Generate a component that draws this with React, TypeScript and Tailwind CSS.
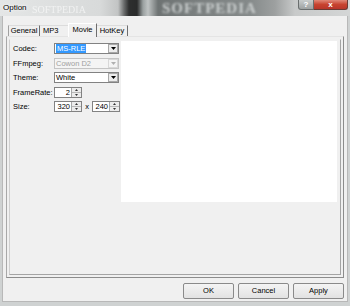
import React from "react";

const font = { fontFamily: '"Liberation Sans", Arial, sans-serif' };

function Arrow({ color = "#000" }: { color?: string }) {
  return (
    <svg width="5" height="3" viewBox="0 0 5 3">
      <path d="M0 0 H5 L2.5 3 Z" fill={color} />
    </svg>
  );
}

function Combo({ text, selected, disabled }: { text: string; selected?: boolean; disabled?: boolean }) {
  return (
    <div
      className={`w-[65px] h-[11px] flex border ${
        disabled ? "border-[#c4c4c4] bg-[#f4f4f4]" : "border-[#828282] bg-white"
      }`}
    >
      <div className="flex-1 flex items-center pl-[1px] overflow-hidden">
        <span
          className={`leading-[9px] ${
            selected ? "bg-[#3399ff] text-white px-[1px]" : disabled ? "text-[#a0a0a0]" : "text-black"
          }`}
        >
          {text}
        </span>
      </div>
      <div
        className={`w-[10px] h-full flex items-center justify-center border ${
          disabled ? "border-[#d8d8d8] bg-[#f4f4f4]" : "border-[#a8a8a8] bg-[#ececec]"
        }`}
      >
        <Arrow color={disabled ? "#b0b0b0" : "#000"} />
      </div>
    </div>
  );
}

function Spin({ value }: { value: string }) {
  return (
    <div className="w-[28px] h-[11px] flex border border-[#828282] bg-white">
      <div className="flex-1 flex items-center justify-end pr-[1px] leading-[9px]">{value}</div>
      <div className="w-[10px] h-full flex flex-col border-l border-[#a8a8a8] bg-[#ececec]">
        <div className="flex-1 flex items-center justify-center border-b border-[#b8b8b8]">
          <svg width="3" height="2" viewBox="0 0 3 2">
            <path d="M0 2 H3 L1.5 0 Z" fill="#333" />
          </svg>
        </div>
        <div className="flex-1 flex items-center justify-center">
          <svg width="3" height="2" viewBox="0 0 3 2">
            <path d="M0 0 H3 L1.5 2 Z" fill="#333" />
          </svg>
        </div>
      </div>
    </div>
  );
}

function Row({ label, children }: { label: string; children: React.ReactNode }) {
  return (
    <div className="flex items-center h-[11px]">
      <div className="w-[41px] leading-[9px]">{label}</div>
      {children}
    </div>
  );
}

function Btn({ label }: { label: string }) {
  return (
    <div className="w-[51px] h-[16px] flex items-center justify-center border border-[#8a8a8a] rounded-[2px] bg-[linear-gradient(#f4f4f4,#e2e2e2)] text-black">
      {label}
    </div>
  );
}

export default function App() {
  return (
    <div
      className="w-[350px] h-[306px] flex flex-col bg-[#cfd2d2] text-[7.5px] text-black overflow-hidden"
      style={font}
    >
      {/* title bar */}
      <div className="relative h-[16px] flex items-start bg-[linear-gradient(90deg,#e4e6e6_0px,#d8dada_100px,#c2c4c4_118px,#6a6c6c_124px,#2e2f2f_129px,#2a2b2b_137px,#9aa0a0_143px,#bfc3c3_148px,#6e7373_158px,#7b8080_200px,#858a8a_250px,#9da0a0_275px,#c8caca_295px,#d4d6d6_350px)] overflow-hidden">
        <div
          className="absolute left-[162px] top-0 text-[15px] leading-[16px] font-bold text-[#c9cdcd] blur-[1px] tracking-[1px]"
          style={{ fontFamily: '"Liberation Serif", serif' }}
        >
          SOFTPEDIA
        </div>
        <div
          className="absolute left-[32px] top-[5px] text-[10px] leading-[10px] text-white opacity-60 blur-[0.5px]"
          style={{ fontFamily: '"Liberation Serif", serif' }}
        >
          SOFTPEDIA
        </div>
        <div className="relative pl-[3px] pt-[3px] text-[8px] leading-[9px] text-black [text-shadow:0_0_4px_#fff,0_0_2px_#fff]">
          Option
        </div>
        <div className="flex-1" />
        <div className="relative flex mr-[2px]">
          <div className="w-[16px] h-[10px] flex items-center justify-center rounded-bl-[3px] border border-t-0 border-[#6a6e6e] bg-[linear-gradient(#c8cccc,#9ea2a2)] text-white text-[8px] font-bold leading-none">
            ?
          </div>
          <div className="w-[34px] h-[10px] flex items-center justify-center rounded-br-[3px] border border-t-0 border-l-0 border-[#6a3a34] bg-[linear-gradient(#e08878,#c7432f_50%,#b8362a)] text-white text-[8px] font-bold leading-none">
            x
          </div>
        </div>
      </div>

      {/* client area */}
      <div className="flex-1 mx-[2px] mb-[4px] bg-[#f0f0f0] border border-t-0 border-[#b8b8b8] flex flex-col pl-[3px] pr-[3px]">
        {/* tabs */}
        <div className="flex items-end h-[20px] pl-[2px] relative z-10">
          <div className="h-[11px] w-[32px] flex items-center justify-center border-l border-t border-l-[#a0a0a0] border-t-[#dcdcdc] border-r border-r-[#6e6e6e]">
            General
          </div>
          <div className="h-[11px] w-[28px] flex items-center pl-[3px] border-t border-t-[#dcdcdc]">MP3</div>
          <div className="h-[14px] w-[29px] -mb-[1px] flex items-center justify-center pb-[2px] bg-[#f0f0f0] border-l border-t border-l-white border-t-white border-r border-r-[#6e6e6e]">
            Movie
          </div>
          <div className="h-[11px] w-[31px] flex items-center justify-center border-t border-t-[#dcdcdc] border-r border-r-[#6e6e6e]">
            HotKey
          </div>
        </div>

        {/* panel */}
        <div className="h-[242px] border border-t-[#e4e4e4] border-l-[#a8a8a8] border-r-[#8c8c8c] border-b-[#8c8c8c] p-[2px] flex">
          <div className="flex-1 border border-t-[#f0f0f0] border-l-[#cfcfcf] border-r-[#a4a4a4] border-b-[#a4a4a4] flex">
            <div className="w-[111px] pl-[3px] pt-[3px] flex flex-col gap-[3.5px]">
              <Row label="Codec:">
                <Combo text="MS-RLE" selected />
              </Row>
              <Row label="FFmpeg:">
                <Combo text="Cowon D2" disabled />
              </Row>
              <Row label="Theme:">
                <Combo text="White" />
              </Row>
              <Row label="FrameRate:">
                <Spin value="2" />
              </Row>
              <Row label="Size:">
                <Spin value="320" />
                <span className="w-[10px] text-center leading-[9px]">x</span>
                <Spin value="240" />
              </Row>
            </div>
            <div className="w-[216px] h-[161px] mt-[1px] bg-white" />
          </div>
        </div>

        {/* buttons */}
        <div className="flex justify-end gap-[4px] mt-[5px]">
          <Btn label="OK" />
          <Btn label="Cancel" />
          <Btn label="Apply" />
        </div>
      </div>
    </div>
  );
}
